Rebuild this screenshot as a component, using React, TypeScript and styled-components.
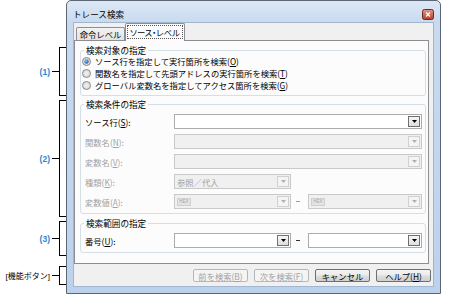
import React, { FC } from "react";
import styled, { createGlobalStyle } from "styled-components";

const GlobalStyle = createGlobalStyle`
  html, body { margin: 0; padding: 0; background: #fff; }
  body {
    font-family: "Noto Sans CJK JP", "Liberation Sans", sans-serif;
    font-size: 8.3px;
    color: #000;
  }
  * { box-sizing: border-box; }
`;

const Page = styled.div`
  display: flex;
  width: 474px;
  height: 298px;
`;

/* annotations on the left */
const Notes = styled.div`
  width: 66px;
  display: flex;
  flex-direction: column;
  align-items: flex-end;
`;

const Note = styled.div<{ $top: number; $height: number }>`
  margin-top: ${(p) => p.$top}px;
  height: ${(p) => p.$height}px;
  display: flex;
  align-items: center;
`;

const NoteLabel = styled.span<{ $blue?: boolean }>`
  font-family: "Liberation Sans", "Noto Sans CJK JP", sans-serif;
  font-size: ${(p) => (p.$blue ? "8.5px" : "8px")};
  font-weight: ${(p) => (p.$blue ? "bold" : "normal")};
  color: ${(p) => (p.$blue ? "#2a86d6" : "#000")};
  margin-right: 2px;
  white-space: nowrap;
`;

const NoteDash = styled.span`
  width: 7px;
  height: 1px;
  background: #000;
`;

const NoteBracket = styled.span`
  align-self: stretch;
  width: 7px;
  border: 1px solid #000;
  border-right: none;
`;

/* window */
const Window = styled.div`
  width: 375px;
  height: 294px;
  border: 1px solid #5b6573;
  border-radius: 5px 5px 0 0;
  background: linear-gradient(#dde8f5 0, #c9daef 21px, #bcd2ec 100%);
  padding: 0 6px 6px;
  display: flex;
  flex-direction: column;
`;

const TitleBar = styled.div`
  height: 21px;
  display: flex;
  align-items: flex-end;
  justify-content: space-between;
  padding-bottom: 2px;
`;

const Title = styled.span`
  font-size: 8.6px;
  line-height: 10px;
  margin-bottom: 1px;
`;

const Client = styled.div`
  flex: 1;
  background: #f0f0f0;
  border: 1px solid #a3b6cf;
  display: flex;
  flex-direction: column;
`;

const TabStrip = styled.div`
  height: 17px;
  display: flex;
  align-items: flex-end;
  padding-left: 2px;
`;

const Tab = styled.div<{ $active?: boolean; $w: number }>`
  width: ${(p) => p.$w}px;
  height: ${(p) => (p.$active ? 18 : 13)}px;
  margin-bottom: ${(p) => (p.$active ? -1 : 0)}px;
  position: relative;
  z-index: ${(p) => (p.$active ? 1 : 0)};
  border: 1px solid #8c8e94;
  border-bottom: none;
  border-radius: 2px 2px 0 0;
  background: ${(p) =>
    p.$active ? "#fcfcfc" : "linear-gradient(#f3f3f3, #e3e3e3)"};
  display: flex;
  align-items: center;
  justify-content: center;
  padding-bottom: ${(p) => (p.$active ? 2 : 0)}px;
  line-height: 10px;
  white-space: nowrap;
`;

const Focus = styled.span`
  border: 1px dotted #555;
  padding: 1px 2px;
  line-height: 10px;
  font-feature-settings: "palt";
  white-space: nowrap;
`;

const Panel = styled.div`
  height: 224px;
  margin-right: 4px;
  border: 1px solid #8c8e94;
  background: #fcfcfc;
  padding: 0 2px 0 5px;
  display: flex;
  flex-direction: column;
`;

const Group = styled.fieldset<{ $top: number }>`
  margin: ${(p) => p.$top}px 0 0;
  padding: 0;
  border: 1px solid #d5dfe5;
  border-radius: 3px;
  min-width: 0;
`;

const GroupTitle = styled.legend`
  margin-left: 3px;
  padding: 0 2px;
  line-height: 9px;
  font-size: 8.6px;
`;

const RadioList = styled.div`
  display: flex;
  flex-direction: column;
  padding: 0 0 4px 1px;
`;

const RadioRow = styled.div`
  height: 12px;
  display: flex;
  align-items: center;
  gap: 4px;
  line-height: 10px;
`;

const Fields = styled.div`
  display: flex;
  flex-direction: column;
  gap: 5px;
  padding: 5px 3px 4px 4px;
`;

const Row = styled.div`
  height: 15px;
  display: grid;
  grid-template-columns: 89px 117px 17px 114px;
  align-items: center;
`;

const Label = styled.span<{ $disabled?: boolean }>`
  color: ${(p) => (p.$disabled ? "#a2a2a2" : "#000")};
  line-height: 10px;
`;

const Combo = styled.div<{ $disabled?: boolean; $span?: boolean }>`
  grid-column: ${(p) => (p.$span ? "2 / 5" : "auto")};
  height: 15px;
  border: 1px solid ${(p) => (p.$disabled ? "#c9c9c9" : "#acacac")};
  background: ${(p) => (p.$disabled ? "#f0f0f0" : "#fff")};
  display: flex;
  align-items: center;
  padding: 0 1px 0 2px;
  gap: 2px;
`;

const ComboText = styled.span`
  flex: 1;
  color: #a2a2a2;
  line-height: 10px;
`;

const Arrow = styled.span<{ $disabled?: boolean }>`
  width: 12px;
  height: 11px;
  border: 1px solid ${(p) => (p.$disabled ? "#d0d0d0" : "#707070")};
  background: ${(p) =>
    p.$disabled ? "#f4f4f4" : "linear-gradient(#f6f6f6, #dedede)"};
  display: flex;
  align-items: center;
  justify-content: center;
`;

const Hex = styled.span`
  width: 14px;
  height: 8px;
  border: 1px solid #cfcfcf;
  background: #e4e4e4;
  color: #a8a8a8;
  font-family: "Liberation Sans", sans-serif;
  font-size: 4.5px;
  line-height: 6px;
  text-align: center;
`;

const Dash = styled.span<{ $disabled?: boolean }>`
  width: 4px;
  height: 1px;
  margin-left: 5px;
  background: ${(p) => (p.$disabled ? "#9a9a9a" : "#333")};
`;

const ButtonRow = styled.div`
  display: flex;
  justify-content: flex-end;
  gap: 6px;
  margin-top: 5px;
  padding-right: 2px;
`;

const Button = styled.div<{ $disabled?: boolean }>`
  width: 55px;
  height: 13px;
  border: 1px solid ${(p) => (p.$disabled ? "#b4b8bb" : "#707070")};
  border-radius: 2px;
  background: ${(p) =>
    p.$disabled
      ? "#f4f4f4"
      : "linear-gradient(#f4f4f4 0%, #ebebeb 48%, #dddddd 52%, #d0d0d0 100%)"};
  color: ${(p) => (p.$disabled ? "#a2a2a2" : "#000")};
  display: flex;
  align-items: center;
  justify-content: center;
  line-height: 10px;
`;

const CloseButton: FC = () => (
  <svg width="12" height="11" viewBox="0 0 12 11">
    <defs>
      <linearGradient id="cg" x1="0" y1="0" x2="0" y2="1">
        <stop offset="0" stopColor="#e39a8b" />
        <stop offset="0.5" stopColor="#cf6650" />
        <stop offset="1" stopColor="#b8402a" />
      </linearGradient>
    </defs>
    <rect x="0.5" y="0.5" width="11" height="10" rx="2" fill="url(#cg)" stroke="#5e2d24" />
    <path d="M4 3.5 L8 7.5 M8 3.5 L4 7.5" stroke="#fff" strokeWidth="1.3" />
  </svg>
);

const Radio: FC<{ checked?: boolean }> = ({ checked }) => (
  <svg width="9" height="9" viewBox="0 0 9 9">
    <defs>
      <radialGradient id="rg" cx="0.5" cy="0.5" r="0.6">
        <stop offset="0" stopColor="#f4f4f4" />
        <stop offset="1" stopColor="#d2d2d2" />
      </radialGradient>
      <radialGradient id="rd" cx="0.4" cy="0.35" r="0.7">
        <stop offset="0" stopColor="#8cc0f2" />
        <stop offset="1" stopColor="#1d55a5" />
      </radialGradient>
    </defs>
    <circle cx="4.5" cy="4.5" r="4" fill="url(#rg)" stroke="#8a8a8a" strokeWidth="1" />
    {checked && <circle cx="4.5" cy="4.5" r="2.2" fill="url(#rd)" />}
  </svg>
);

const DownArrow: FC<{ disabled?: boolean }> = ({ disabled }) => (
  <Arrow $disabled={disabled}>
    <svg width="5" height="3" viewBox="0 0 5 3">
      <path d="M0 0 H5 L2.5 3 Z" fill={disabled ? "#b0b0b0" : "#000"} />
    </svg>
  </Arrow>
);

const ComboBox: FC<{ disabled?: boolean; span?: boolean; text?: string; hex?: boolean }> = ({
  disabled,
  span,
  text,
  hex,
}) => (
  <Combo $disabled={disabled} $span={span}>
    {hex && <Hex>HEX</Hex>}
    <ComboText>{text}</ComboText>
    <DownArrow disabled={disabled} />
  </Combo>
);

const Bracket: FC<{ top: number; height: number; label: string; blue?: boolean }> = ({
  top,
  height,
  label,
  blue,
}) => (
  <Note $top={top} $height={height}>
    <NoteLabel $blue={blue}>{label}</NoteLabel>
    <NoteDash />
    <NoteBracket />
  </Note>
);

const App: FC = () => {
  return (
    <>
      <GlobalStyle />
      <Page>
        <Notes>
          <Bracket top={47} height={49} label="(1)" blue />
          <Bracket top={4} height={117} label="(2)" blue />
          <Bracket top={4} height={35} label="(3)" blue />
          <Bracket top={10} height={19} label="[機能ボタン]" />
        </Notes>
        <Window>
          <TitleBar>
            <Title>トレース検索</Title>
            <CloseButton />
          </TitleBar>
          <Client>
            <TabStrip>
              <Tab $w={49}>命令レベル</Tab>
              <Tab $w={60} $active>
                <Focus>ソース・レベル</Focus>
              </Tab>
            </TabStrip>
            <Panel>
              <Group $top={5}>
                <GroupTitle>検索対象の指定</GroupTitle>
                <RadioList>
                  <RadioRow>
                    <Radio checked />
                    <span>
                      ソース行を指定して実行箇所を検索(<u>O</u>)
                    </span>
                  </RadioRow>
                  <RadioRow>
                    <Radio />
                    <span>
                      関数名を指定して先頭アドレスの実行箇所を検索(<u>T</u>)
                    </span>
                  </RadioRow>
                  <RadioRow>
                    <Radio />
                    <span>
                      グローバル変数名を指定してアクセス箇所を検索(<u>G</u>)
                    </span>
                  </RadioRow>
                </RadioList>
              </Group>

              <Group $top={4}>
                <GroupTitle>検索条件の指定</GroupTitle>
                <Fields>
                  <Row>
                    <Label>
                      ソース行(<u>S</u>):
                    </Label>
                    <ComboBox span />
                  </Row>
                  <Row>
                    <Label $disabled>
                      関数名(<u>N</u>):
                    </Label>
                    <ComboBox span disabled />
                  </Row>
                  <Row>
                    <Label $disabled>
                      変数名(<u>V</u>):
                    </Label>
                    <ComboBox span disabled />
                  </Row>
                  <Row>
                    <Label $disabled>
                      種類(<u>K</u>):
                    </Label>
                    <ComboBox disabled text="参照／代入" />
                  </Row>
                  <Row>
                    <Label $disabled>
                      変数値(<u>A</u>):
                    </Label>
                    <ComboBox disabled hex />
                    <Dash $disabled />
                    <ComboBox disabled hex />
                  </Row>
                </Fields>
              </Group>

              <Group $top={5}>
                <GroupTitle>検索範囲の指定</GroupTitle>
                <Fields>
                  <Row>
                    <Label>
                      番号(<u>U</u>):
                    </Label>
                    <ComboBox />
                    <Dash />
                    <ComboBox />
                  </Row>
                </Fields>
              </Group>
            </Panel>
            <ButtonRow>
              <Button $disabled>
                前を検索(<u>B</u>)
              </Button>
              <Button $disabled>
                次を検索(<u>F</u>)
              </Button>
              <Button>キャンセル</Button>
              <Button>
                ヘルプ(<u>H</u>)
              </Button>
            </ButtonRow>
          </Client>
        </Window>
      </Page>
    </>
  );
};

export default App;
